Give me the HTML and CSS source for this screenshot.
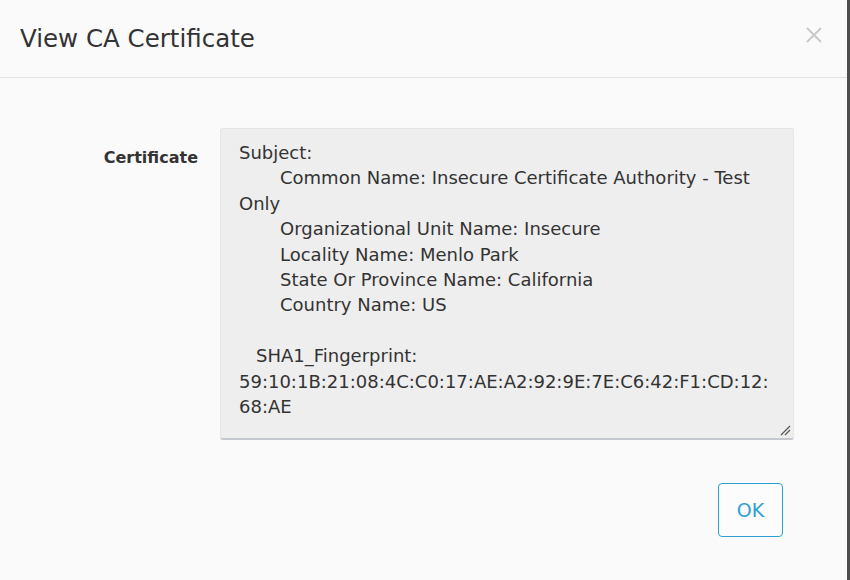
FILE: index.html
```html
<!DOCTYPE html>
<html>
<head>
<meta charset="utf-8">
<link rel="stylesheet" href="styles.css">
</head>
<body>
<div class="modal">
  <header class="modal-header">
    <h1 class="title">View CA Certificate</h1>
    <button class="close" aria-label="Close">
      <svg width="16" height="16" viewBox="0 0 16 16"><path d="M1 1 L15 15 M15 1 L1 15" stroke="#c9c9c9" stroke-width="2" fill="none"/></svg>
    </button>
  </header>
  <div class="modal-body">
    <div class="field">
      <label class="label">Certificate</label>
      <div class="cert">
        <div class="ln">Subject:</div>
        <div class="ln ind">Common Name: Insecure Certificate Authority - Test</div>
        <div class="ln">Only</div>
        <div class="ln ind">Organizational Unit Name: Insecure</div>
        <div class="ln ind">Locality Name: Menlo Park</div>
        <div class="ln ind">State Or Province Name: California</div>
        <div class="ln ind">Country Name: US</div>
        <div class="ln">&nbsp;</div>
        <div class="ln ind2">SHA1_Fingerprint:</div>
        <div class="ln">59:10:1B:21:08:4C:C0:17:AE:A2:92:9E:7E:C6:42:F1:CD:12:</div>
        <div class="ln">68:AE</div>
        <svg class="grip" width="11" height="11" viewBox="0 0 11 11"><path d="M1 10 L10 1 M5 10 L10 5" stroke="#555" stroke-width="1.2" fill="none"/></svg>
      </div>
    </div>
  </div>
  <div class="modal-footer">
    <button class="ok">OK</button>
  </div>
</div>
</body>
</html>
```
FILE: styles.css
```css
html, body {
  margin: 0;
  padding: 0;
}
body {
  background: #4e4e4e;
  width: 850px;
  height: 580px;
  overflow: hidden;
  font-family: "DejaVu Sans", "Open Sans", sans-serif;
  color: #333;
}
.modal {
  width: 847px;
  height: 580px;
  background: #fafafa;
}
.modal-header {
  height: 77px;
  border-bottom: 1px solid #e3e3e3;
  display: flex;
  justify-content: space-between;
  align-items: flex-start;
  padding: 0 25px 0 20px;
}
.title {
  margin: 0;
  font-size: 24.5px;
  font-weight: normal;
  line-height: 77px;
  color: #333;
}
.close {
  margin-top: 27px;
  padding: 0;
  border: 0;
  background: none;
  width: 16px;
  height: 16px;
  display: block;
}
.close svg { display: block; }
.modal-body {
  padding-top: 50px;
}
.field {
  display: flex;
  align-items: flex-start;
}
.label {
  width: 198px;
  text-align: right;
  margin-right: 22px;
  padding-top: 18px;
  font-size: 16px;
  line-height: 24px;
  font-weight: bold;
  color: #333;
}
.cert {
  position: relative;
  box-sizing: border-box;
  width: 574px;
  height: 312px;
  background: #eeeeee;
  border: 1px solid #e6e6e6;
  border-bottom: 2px solid #c4c7cc;
  border-radius: 3px;
  padding: 11px 4px 0 18px;
  font-size: 18px;
  line-height: 25.4px;
  color: #333;
}
.ln { white-space: pre; }
.ind { padding-left: 41px; }
.ind2 { padding-left: 17px; }
.grip {
  position: absolute;
  right: 2px;
  bottom: 2px;
}
.modal-footer {
  display: flex;
  justify-content: flex-end;
  padding-right: 64px;
  margin-top: 43px;
}
.ok {
  width: 65px;
  height: 54px;
  box-sizing: border-box;
  border: 1px solid #2e9fd2;
  border-radius: 4px;
  background: #fcfcfc;
  color: #2e9fd2;
  font-family: "DejaVu Sans", "Open Sans", sans-serif;
  font-size: 19px;
  padding: 0;
}
```
